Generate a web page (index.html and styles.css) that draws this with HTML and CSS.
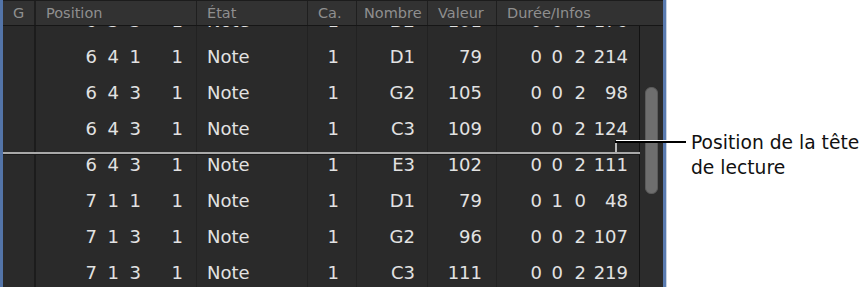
FILE: index.html
```html
<!DOCTYPE html>
<html lang="fr">
<head>
    <meta charset="UTF-8">
    <title>Liste des événements</title>
    <link rel="stylesheet" href="styles.css">
</head>
<body>
    <div class="page">
        <div class="panel">
            <div class="head">
                <div class="hcell hcell-g">G</div>
                <div class="hcell">Position</div>
                <div class="hcell">État</div>
                <div class="hcell">Ca.</div>
                <div class="hcell hcell-nombre">Nombre</div>
                <div class="hcell">Valeur</div>
                <div class="hcell hcell-last">Durée/Infos</div>
            </div>

            <div class="body">
                <div class="rows">
                    <div class="row row-first">
                        <div class="cell cell-g"></div>
                        <div class="cell cell-pos"><span>6</span><span>3</span><span>3</span><span class="wide">1</span></div>
                        <div class="cell cell-etat">Note</div>
                        <div class="cell cell-ca">1</div>
                        <div class="cell cell-num">D2</div>
                        <div class="cell cell-val">101</div>
                        <div class="cell cell-dur"><span>0</span><span>0</span><span class="mid">1</span><span class="wide">176</span></div>
                    </div>
                    <div class="row">
                        <div class="cell cell-g"></div>
                        <div class="cell cell-pos"><span>6</span><span>4</span><span>1</span><span class="wide">1</span></div>
                        <div class="cell cell-etat">Note</div>
                        <div class="cell cell-ca">1</div>
                        <div class="cell cell-num">D1</div>
                        <div class="cell cell-val">79</div>
                        <div class="cell cell-dur"><span>0</span><span>0</span><span class="mid">2</span><span class="wide">214</span></div>
                    </div>
                    <div class="row">
                        <div class="cell cell-g"></div>
                        <div class="cell cell-pos"><span>6</span><span>4</span><span>3</span><span class="wide">1</span></div>
                        <div class="cell cell-etat">Note</div>
                        <div class="cell cell-ca">1</div>
                        <div class="cell cell-num">G2</div>
                        <div class="cell cell-val">105</div>
                        <div class="cell cell-dur"><span>0</span><span>0</span><span class="mid">2</span><span class="wide">98</span></div>
                    </div>
                    <div class="row">
                        <div class="cell cell-g"></div>
                        <div class="cell cell-pos"><span>6</span><span>4</span><span>3</span><span class="wide">1</span></div>
                        <div class="cell cell-etat">Note</div>
                        <div class="cell cell-ca">1</div>
                        <div class="cell cell-num">C3</div>
                        <div class="cell cell-val">109</div>
                        <div class="cell cell-dur"><span>0</span><span>0</span><span class="mid">2</span><span class="wide">124</span></div>
                    </div>
                    <div class="row">
                        <div class="cell cell-g"></div>
                        <div class="cell cell-pos"><span>6</span><span>4</span><span>3</span><span class="wide">1</span></div>
                        <div class="cell cell-etat">Note</div>
                        <div class="cell cell-ca">1</div>
                        <div class="cell cell-num">E3</div>
                        <div class="cell cell-val">102</div>
                        <div class="cell cell-dur"><span>0</span><span>0</span><span class="mid">2</span><span class="wide">111</span></div>
                    </div>
                    <div class="row">
                        <div class="cell cell-g"></div>
                        <div class="cell cell-pos"><span>7</span><span>1</span><span>1</span><span class="wide">1</span></div>
                        <div class="cell cell-etat">Note</div>
                        <div class="cell cell-ca">1</div>
                        <div class="cell cell-num">D1</div>
                        <div class="cell cell-val">79</div>
                        <div class="cell cell-dur"><span>0</span><span>1</span><span class="mid">0</span><span class="wide">48</span></div>
                    </div>
                    <div class="row">
                        <div class="cell cell-g"></div>
                        <div class="cell cell-pos"><span>7</span><span>1</span><span>3</span><span class="wide">1</span></div>
                        <div class="cell cell-etat">Note</div>
                        <div class="cell cell-ca">1</div>
                        <div class="cell cell-num">G2</div>
                        <div class="cell cell-val">96</div>
                        <div class="cell cell-dur"><span>0</span><span>0</span><span class="mid">2</span><span class="wide">107</span></div>
                    </div>
                    <div class="row">
                        <div class="cell cell-g"></div>
                        <div class="cell cell-pos"><span>7</span><span>1</span><span>3</span><span class="wide">1</span></div>
                        <div class="cell cell-etat">Note</div>
                        <div class="cell cell-ca">1</div>
                        <div class="cell cell-num">C3</div>
                        <div class="cell cell-val">111</div>
                        <div class="cell cell-dur"><span>0</span><span>0</span><span class="mid">2</span><span class="wide">219</span></div>
                    </div>
                </div>

                <div class="scroll">
                    <div class="thumb"></div>
                </div>
            </div>
        </div>

        <!-- playhead and its callout sit over the list -->
        <div class="playhead"></div>
        <svg class="leader" width="80" height="16" viewBox="0 0 80 16">
            <line x1="1" y1="1" x2="1" y2="12" stroke="#b8b8b8" stroke-width="2"/>
            <line x1="1" y1="0.5" x2="71" y2="0.5" stroke="#ffffff" stroke-width="1"/>
            <line x1="0" y1="2" x2="71" y2="2" stroke="#000000" stroke-width="2"/>
        </svg>
        <div class="callout">Position de la tête<br>de lecture</div>
    </div>
</body>
</html>
```

FILE: styles.css
```css
body {
    margin: 0;
    background-color: #ffffff;
    font-family: "DejaVu Sans", sans-serif;
}

.page {
    position: relative;
    width: 864px;
    height: 290px;
    overflow: hidden;
}

.panel {
    display: flex;
    flex-direction: column;
    width: 660px;
    height: 287px;
    border-left: 3px solid #5374a8;
    border-right: 3px solid #5a7bb0;
    box-shadow: 1px 0 0 #c9d3e2;
    background-color: #2a2a2a;
}

.head {
    position: relative;
    z-index: 1;
    display: grid;
    grid-template-columns: 33px 161px 111px 49px 71px 69px 166px;
    height: 24px;
    background-color: #323232;
    border-top: 1px solid #1c1c1c;
    border-bottom: 1px solid #161616;
}

.hcell {
    padding-left: 10px;
    font-size: 14.5px;
    line-height: 24px;
    color: #8f8f8f;
    border-right: 1px solid #1f1f1f;
    white-space: nowrap;
}

.hcell-g {
    padding-left: 0;
    text-align: center;
    border-right-width: 2px;
}

.hcell-nombre {
    padding-left: 7px;
}

.hcell-last {
    border-right: none;
}

.body {
    display: flex;
    flex: 1;
    overflow: hidden;
}

.rows {
    width: 637px;
    overflow: hidden;
}

.row {
    display: grid;
    grid-template-columns: 33px 161px 111px 49px 71px 69px 143px;
    height: 36px;
}

.row-first {
    margin-top: -24px;
}

.cell {
    display: flex;
    align-items: center;
    justify-content: flex-end;
    font-size: 18px;
    color: #e2e2e2;
    border-right: 1px solid #222222;
    white-space: nowrap;
}

.cell-g {
    border-right: 2px solid #1c1c1c;
}

.cell-pos {
    padding-right: 13px;
}

.cell-pos span,
.cell-dur span {
    width: 22px;
    text-align: right;
}

.cell-pos span.wide {
    width: 42px;
}

.cell-etat {
    justify-content: flex-start;
    padding-left: 10px;
}

.cell-ca {
    padding-right: 17px;
}

.cell-num {
    padding-right: 12px;
}

.cell-val {
    padding-right: 14px;
}

.cell-dur {
    padding-right: 11px;
    border-right: 1px solid #121212;
}

.cell-dur span {
    width: 21px;
}

.cell-dur span.mid {
    width: 23px;
}

.cell-dur span.wide {
    width: 42px;
}

.scroll {
    position: relative;
    width: 23px;
    background-color: #2c2c2c;
}

.thumb {
    position: absolute;
    left: 5px;
    top: 61px;
    width: 11px;
    height: 105px;
    border-radius: 6px;
    background-color: #6e6e6e;
    border: 1px solid #5a5a5a;
}

.playhead {
    position: absolute;
    left: 3px;
    top: 152px;
    width: 637px;
    height: 2px;
    background-color: #a9a9a9;
    border-bottom: 1px solid #1a1a1a;
}

.leader {
    position: absolute;
    left: 615px;
    top: 140px;
}

.callout {
    position: absolute;
    left: 691px;
    top: 130px;
    font-size: 18.7px;
    line-height: 25px;
    color: #111111;
}
```
